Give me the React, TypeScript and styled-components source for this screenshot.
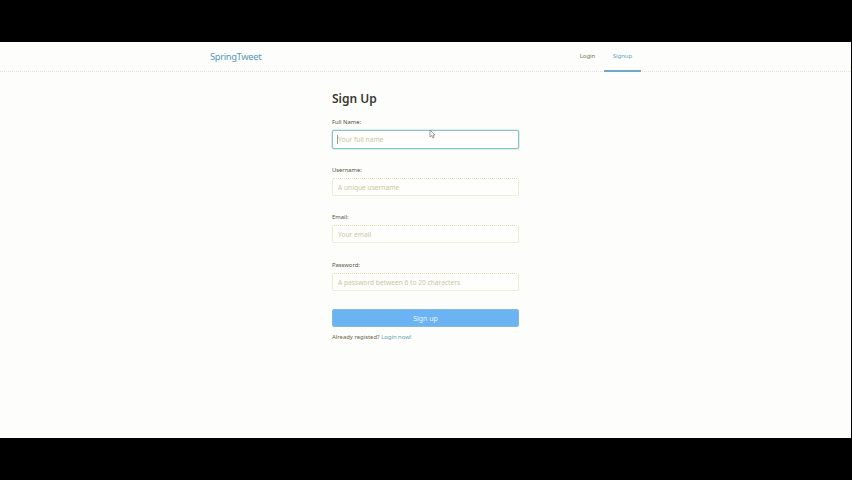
import React from "react";
import styled, { createGlobalStyle } from "styled-components";

const GlobalStyle = createGlobalStyle`
  * { box-sizing: border-box; }
  body { margin: 0; background: #000; overflow: hidden; }
  button, input { font-family: inherit; }
`;

const Screen = styled.div`
  height: 480px;
  padding: 42px 0;
  background: #000;
  font-family: "Noto Sans", "Open Sans", sans-serif;
`;

const Page = styled.div`
  width: 851px;
  height: 396px;
  background: #fdfdfb;
`;

const Header = styled.header`
  height: 30px;
  padding: 0 210px;
  display: flex;
  justify-content: space-between;
  border-bottom: 1px dotted #e2e2d4;
`;

const Brand = styled.a`
  font-size: 9.4px;
  line-height: 30px;
  letter-spacing: -0.36px;
  color: #5599bb;
`;

const Nav = styled.nav`
  display: flex;
  height: 30px;
`;

const NavItem = styled.a<{ $active?: boolean }>`
  width: ${(p) => (p.$active ? 37 : 33)}px;
  height: 30px;
  text-align: center;
  font-size: 6.1px;
  line-height: 28px;
  letter-spacing: -0.1px;
  color: ${(p) => (p.$active ? "#5ba4c8" : "#77774f")};
  border-bottom: ${(p) => (p.$active ? "2px solid #6fa9c8" : "0")};
`;

const Form = styled.form`
  width: 187px;
  margin: 17px 0 0 332px;
`;

const Title = styled.h1`
  margin: 0;
  height: 19px;
  font-size: 12px;
  line-height: 19px;
  font-weight: 600;
  color: #383833;
`;

const Field = styled.div`
  height: 47.5px;
`;

const Label = styled.label`
  display: block;
  height: 22px;
  padding-top: 7px;
  font-size: 5.8px;
  line-height: 14px;
  color: #51513a;
`;

const Input = styled.input<{ $focused?: boolean }>`
  display: block;
  width: 187px;
  height: ${(p) => (p.$focused ? 19 : 18)}px;
  padding: ${(p) => (p.$focused ? 0 : 1)}px 5px 0;
  outline: 0;
  border: 1px ${(p) => (p.$focused ? "solid #8bc6b8" : "dotted #dcdca8")};
  border-radius: 2px;
  box-shadow: ${(p) => (p.$focused ? "0 0 0 0.5px #b5dfec" : "none")};
  background: #fefefc;
  font-size: 6.65px;
  color: #444;
  &::placeholder { color: #c8c8a0; opacity: 1; }
`;

const InputBox = styled.div`
  position: relative;
`;

const Caret = styled.span`
  position: absolute;
  left: 5px;
  top: 5px;
  width: 1px;
  height: 9px;
  background: #999;
`;

const Pointer = styled.svg`
  position: absolute;
  left: 97px;
  top: -1px;
`;

const Submit = styled.button`
  display: block;
  width: 187px;
  height: 18px;
  margin-top: 11px;
  padding: 1px 0 0;
  border: 1px solid #80bcd8;
  border-radius: 2px;
  background: #6bb3f2;
  color: #e9f6ff;
  font-size: 7px;
  line-height: 16px;
`;

const Footnote = styled.p`
  margin: 3px 0 0;
  font-size: 5.9px;
  line-height: 14px;
  color: #66664a;
`;

const LoginLink = styled.a`
  color: #5a9db8;
`;

const fields = [
  { label: "Full Name:", hint: "Your full name", focused: true },
  { label: "Username:", hint: "A unique username" },
  { label: "Email:", hint: "Your email" },
  { label: "Password:", hint: "A password between 6 to 20 characters" },
];

export default function App() {
  return (
    <Screen>
      <GlobalStyle />
      <Page>
        <Header>
          <Brand>SpringTweet</Brand>
          <Nav>
            <NavItem>Login</NavItem>
            <NavItem $active>Signup</NavItem>
          </Nav>
        </Header>
        <Form>
          <Title>Sign Up</Title>
          {fields.map((f) => (
            <Field key={f.label}>
              <Label>{f.label}</Label>
              <InputBox>
                <Input placeholder={f.hint} $focused={f.focused} />
                {f.focused && <Caret />}
                {f.focused && (
                  <Pointer width="7" height="10" viewBox="0 0 7 10">
                    <path d="M1 1v7l1.7-1.5L3.9 9l1.2-.6L4 6h2z" fill="#fff" stroke="#777" strokeWidth=".7" />
                  </Pointer>
                )}
              </InputBox>
            </Field>
          ))}
          <Submit type="button">Sign up</Submit>
          <Footnote>
            Already registed? <LoginLink>Login now!</LoginLink>
          </Footnote>
        </Form>
      </Page>
    </Screen>
  );
}
